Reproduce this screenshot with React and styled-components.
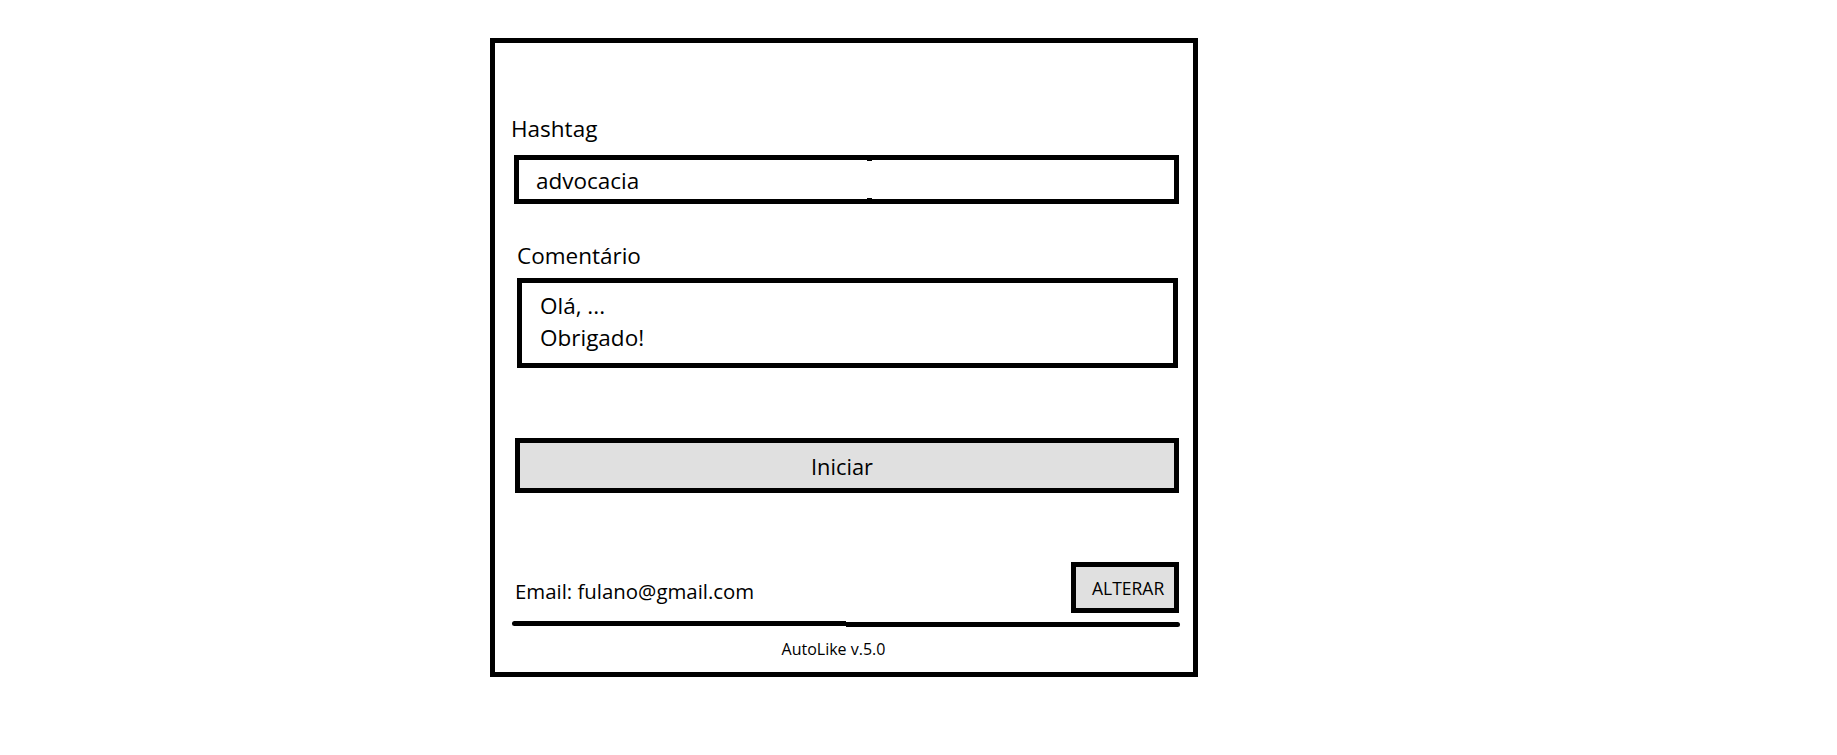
import React from 'react';
import styled, { createGlobalStyle } from 'styled-components';

const GlobalStyle = createGlobalStyle`
    body{
        margin:0;
        background:#fff;
        color:#000;
        font-family:"Open Sans", "Noto Sans", sans-serif;
    }
`

const Page = styled.div`
    padding:38px 0 0 490px;
`

const Panel = styled.main`
    box-sizing:border-box;
    width:708px;
    height:639px;
    border:5px solid #000;
    display:flex;
    flex-direction:column;
    align-items:flex-start;
    padding:0 13px 0 18px;
`

const Label = styled.label`
    display:block;
    font-size:22.5px;
    line-height:30px;
    margin-top:${p => p.$top}px;
    margin-left:${p => p.$indent || 0}px;
`

const Field = styled.div`
    position:relative;
    margin:11px 0 0 1px;
    width:665px;
    height:49px;

    &::before, &::after{
        content:'';
        position:absolute;
        left:353px;
        width:5px;
        height:1px;
        background:#000;
    }
    &::before{ top:5px; }
    &::after{ bottom:5px; }
`

const TextInput = styled.input`
    box-sizing:border-box;
    width:100%;
    height:100%;
    margin:0;
    border:5px solid #000;
    border-radius:0;
    padding:2px 0 0 17px;
    font-family:inherit;
    font-size:22.5px;
    color:#000;
    background:#fff;
    outline:none;
`

const TextArea = styled.textarea`
    box-sizing:border-box;
    display:block;
    width:661px;
    height:90px;
    margin:7px 0 0 4px;
    border:5px solid #000;
    border-radius:0;
    padding:7px 0 0 18px;
    font-family:inherit;
    font-size:22.5px;
    line-height:32px;
    color:#000;
    background:#fff;
    resize:none;
    overflow:hidden;
    outline:none;
`

const StartButton = styled.button`
    box-sizing:border-box;
    width:664px;
    height:55px;
    margin:70px 0 0 2px;
    border:5px solid #000;
    border-radius:0;
    padding:2px 10px 0 0;
    background:#e0e0e0;
    font-family:inherit;
    font-size:21.8px;
    color:#000;
    cursor:pointer;
`

const AccountRow = styled.div`
    display:flex;
    align-items:flex-end;
    justify-content:space-between;
    width:666px;
    margin-top:69px;
`

const Email = styled.span`
    font-size:20.4px;
    line-height:28px;
    margin:0 0 8px 2px;
`

const SmallButton = styled.button`
    box-sizing:border-box;
    width:108px;
    height:51px;
    border:5px solid #000;
    border-radius:0;
    padding:1px 0 0 16px;
    text-align:left;
    background:#e0e0e0;
    font-family:inherit;
    font-size:17.5px;
    color:#000;
    cursor:pointer;
`

const Divider = styled.div`
    display:flex;
    width:668px;
    margin:8px 0 0 -1px;
`

const DividerHalf = styled.span`
    flex:1;
    height:5px;
    background:#000;
    margin-top:${p => p.$right ? 1 : 0}px;
    border-radius:${p => p.$right ? '0 3px 3px 0' : '3px 0 0 3px'};
`

const Footer = styled.footer`
    align-self:stretch;
    margin-top:12px;
    padding-right:26px;
    text-align:center;
    font-size:16px;
    line-height:20px;
`

export default function App() {
    return (
        <Page>
            <GlobalStyle />
            <Panel>
                <Label $top={71} $indent={-2} htmlFor="hashtag">Hashtag</Label>
                <Field>
                    <TextInput id="hashtag" type="text" defaultValue="advocacia" />
                </Field>

                <Label $top={37} $indent={4} htmlFor="comentario">Comentário</Label>
                <TextArea id="comentario" defaultValue={'Olá, ...\nObrigado!'} />

                <StartButton type="button">Iniciar</StartButton>

                <AccountRow>
                    <Email>Email: fulano@gmail.com</Email>
                    <SmallButton type="button">ALTERAR</SmallButton>
                </AccountRow>
                <Divider>
                    <DividerHalf />
                    <DividerHalf $right />
                </Divider>

                <Footer>AutoLike v.5.0</Footer>
            </Panel>
        </Page>
    );
}
